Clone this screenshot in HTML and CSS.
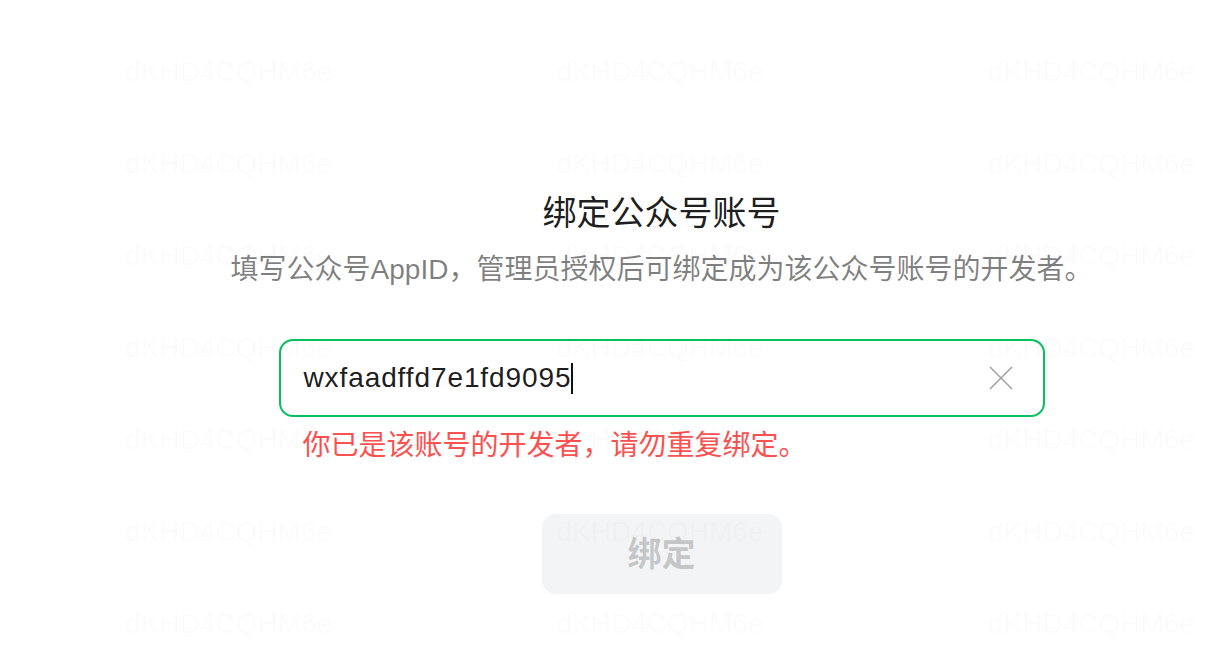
FILE: index.html
```html
<!DOCTYPE html>
<html lang="zh-CN">

<head>
    <meta charset="UTF-8">
    <meta name="viewport" content="width=device-width, initial-scale=1.0">
    <title>绑定公众号账号</title>
    <link rel="stylesheet" href="styles.css">
</head>

<body>
    <div class="page">
        <div class="bind-panel">
            <h1 class="bind-title">绑定公众号账号</h1>
            <p class="bind-desc">填写公众号AppID，管理员授权后可绑定成为该公众号账号的开发者。</p>

            <div class="field-group">
                <div class="field">
                    <span class="field-value">wxfaadffd7e1fd9095</span>
                    <span class="caret"></span>
                    <svg class="clear-icon" viewBox="0 0 24 24" width="24" height="24">
                        <path d="M1 1 L23 23 M23 1 L1 23" stroke="#a3a3a3" stroke-width="1.6" fill="none"/>
                    </svg>
                </div>
                <div class="field-error">你已是该账号的开发者，请勿重复绑定。</div>
            </div>

            <button class="bind-btn" disabled>绑定</button>
        </div>
    </div>

    <div class="watermark">
        <span>dKHD4CQHM6e</span><span>dKHD4CQHM6e</span><span>dKHD4CQHM6e</span>
        <span>dKHD4CQHM6e</span><span>dKHD4CQHM6e</span><span>dKHD4CQHM6e</span>
        <span>dKHD4CQHM6e</span><span>dKHD4CQHM6e</span><span>dKHD4CQHM6e</span>
        <span>dKHD4CQHM6e</span><span>dKHD4CQHM6e</span><span>dKHD4CQHM6e</span>
        <span>dKHD4CQHM6e</span><span>dKHD4CQHM6e</span><span>dKHD4CQHM6e</span>
        <span>dKHD4CQHM6e</span><span>dKHD4CQHM6e</span><span>dKHD4CQHM6e</span>
        <span>dKHD4CQHM6e</span><span>dKHD4CQHM6e</span><span>dKHD4CQHM6e</span>
    </div>
</body>
</html>
```

FILE: styles.css
```css
* {
    margin: 0;
    padding: 0;
    box-sizing: border-box;
    font-family: "Liberation Sans", "Noto Sans CJK SC", sans-serif;
}

body {
    background-color: white;
    min-height: 100vh;
    overflow: hidden;
}

.page {
    padding: 189px 0 0 105px;
}

.bind-panel {
    display: flex;
    flex-direction: column;
    align-items: center;
}

.bind-title {
    font-size: 34px;
    line-height: 48px;
    font-weight: 400;
    color: rgba(0, 0, 0, 0.9);
}

.bind-desc {
    margin-top: 13px;
    font-size: 28px;
    line-height: 40px;
    color: rgba(0, 0, 0, 0.5);
}

.field-group {
    width: 766px;
    margin-top: 49px;
}

.field {
    height: 78px;
    border: 2px solid #07c160;
    border-radius: 14px;
    padding: 0 30px 0 23px;
    display: flex;
    align-items: center;
}

.field-value {
    font-size: 28px;
    letter-spacing: 0.9px;
    color: rgba(0, 0, 0, 0.9);
}

.caret {
    width: 2px;
    height: 31px;
    background-color: #111;
}

.clear-icon {
    margin-left: auto;
}

.field-error {
    margin-top: 9px;
    padding-left: 24px;
    font-size: 28px;
    line-height: 40px;
    color: #fa5151;
}

.bind-btn {
    margin-top: 48px;
    width: 240px;
    height: 80px;
    padding-bottom: 5px;
    border: none;
    border-radius: 14px;
    background-color: #f3f4f5;
    color: rgba(0, 0, 0, 0.2);
    font-size: 34px;
    font-weight: 700;
}

.watermark {
    position: fixed;
    top: 0;
    left: 0;
    width: 100%;
    height: 100%;
    padding: 26px 0 0 125px;
    display: grid;
    grid-template-columns: repeat(3, 431.5px);
    grid-auto-rows: 92px;
    pointer-events: none;
}

.watermark span {
    font-family: "Liberation Sans", sans-serif;
    font-size: 28px;
    line-height: 92px;
    white-space: nowrap;
    color: rgba(0, 0, 0, 0.014);
}
```
